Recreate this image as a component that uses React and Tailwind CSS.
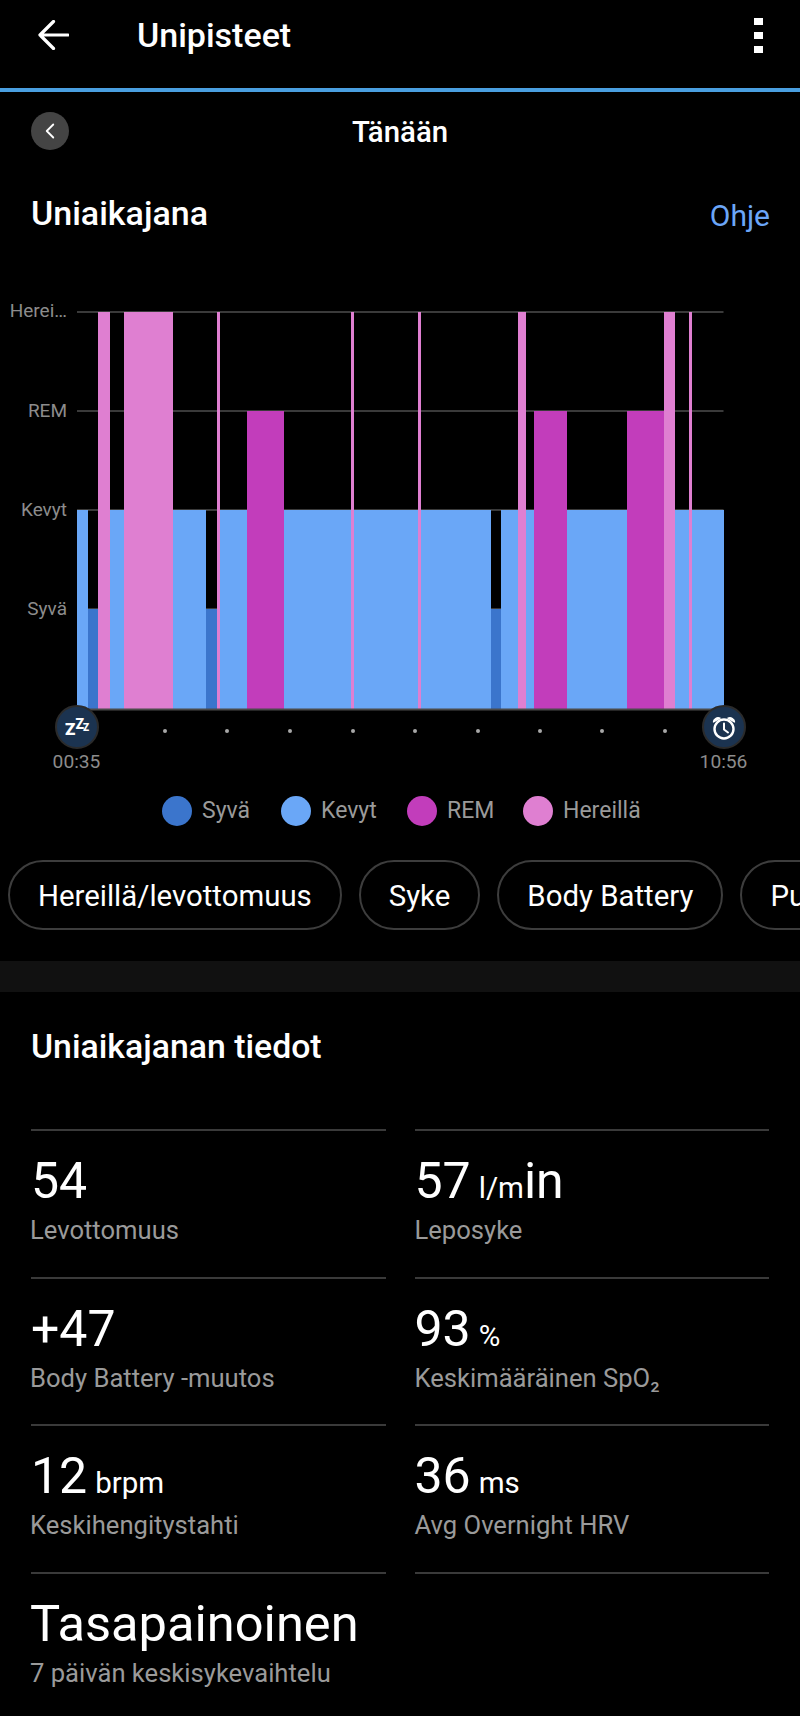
import React from 'react';
import { ChevronLeft } from 'lucide-react';

const LIGHT = '#6aa7f7';
const DEEP = '#3b75cc';
const REM = '#c23dbb';
const AWAKE = '#df7fd1';

const levels = { awake: 312, rem: 411, light: 510, deep: 609 };
const BASE = 709;

// [from, to, level, colour]
const bars = [
  [77, 88, 'light', LIGHT],
  [88, 98, 'deep', DEEP],
  [98, 110, 'awake', AWAKE],
  [110, 124, 'light', LIGHT],
  [124, 173, 'awake', AWAKE],
  [173, 206, 'light', LIGHT],
  [206, 217, 'deep', DEEP],
  [217, 220, 'awake', AWAKE],
  [220, 247, 'light', LIGHT],
  [247, 284, 'rem', REM],
  [284, 351, 'light', LIGHT],
  [351, 354, 'awake', AWAKE],
  [354, 418, 'light', LIGHT],
  [418, 421, 'awake', AWAKE],
  [421, 491, 'light', LIGHT],
  [491, 501, 'deep', DEEP],
  [501, 518, 'light', LIGHT],
  [518, 526, 'awake', AWAKE],
  [526, 534, 'light', LIGHT],
  [534, 567, 'rem', REM],
  [567, 627, 'light', LIGHT],
  [627, 664, 'rem', REM],
  [664, 675, 'awake', AWAKE],
  [675, 689, 'light', LIGHT],
  [689, 692, 'awake', AWAKE],
  [692, 723.5, 'light', LIGHT],
];

const ticks = [165, 227, 290, 353, 415, 478, 540, 602, 665];

const SleepChart = () => (
  <svg viewBox="0 300 800 490" className="block w-full h-[490px]">
    {Object.values(levels).map((y) => (
      <rect key={y} x="77" y={y - 1} width="646.5" height="2" fill="#3a3a3a" />
    ))}
    <g shapeRendering="crispEdges">
      {bars.map(([a, b, level, color]) => (
        <rect key={a} x={a} y={levels[level]} width={b - a} height={BASE - levels[level]} fill={color} />
      ))}
    </g>
    <rect x="77" y={BASE - 0.5} width="646.5" height="2" fill="#4a4a4a" />
    <g fill="#8c8c8c" fontSize="19" textAnchor="end">
      <text x="67" y="317">Herei…</text>
      <text x="67" y="417">REM</text>
      <text x="67" y="516">Kevyt</text>
      <text x="67" y="615">Syvä</text>
    </g>
    {ticks.map((x) => (
      <circle key={x} cx={x} cy="731" r="2" fill="#a8a8a8" />
    ))}
    <circle cx="77" cy="727" r="21" fill="#1b3350" stroke="#2b2b2b" strokeWidth="2" />
    <g fill="#fff" fontWeight="900">
      <text x="65" y="735" fontSize="17">Z</text>
      <text x="75.5" y="729" fontSize="14">Z</text>
      <text x="83" y="731" fontSize="10">Z</text>
    </g>
    <circle cx="724" cy="727" r="21" fill="#1b3350" stroke="#2b2b2b" strokeWidth="2" />
    <g fill="none" stroke="#fff" strokeWidth="2.4" strokeLinecap="round" strokeLinejoin="round">
      <circle cx="724" cy="729" r="9.5" />
      <path d="M724 723.5V729.5L728 732.5" strokeWidth="2" />
      <path d="M713.5 722C713.5 719 717 717 720 718.2Z" fill="#fff" strokeWidth="1.4" />
      <path d="M734.5 722C734.5 719 731 717 728 718.2Z" fill="#fff" strokeWidth="1.4" />
    </g>
    <g fill="#8c8c8c" fontSize="19.2" textAnchor="middle">
      <text x="76.5" y="768">00:35</text>
      <text x="723.5" y="768">10:56</text>
    </g>
  </svg>
);

const LegendItem = ({ color, label, className }) => (
  <div className={`flex items-center ${className}`}>
    <span className="w-[30px] h-[30px] rounded-full mr-[10px]" style={{ backgroundColor: color }} />
    <span className="text-[23px] leading-[30px] text-[#9a9a9a]">{label}</span>
  </div>
);

const Pill = ({ children }) => (
  <div className="shrink-0 h-[70px] px-[28px] pt-[3px] flex items-center rounded-full border-2 border-[#3d3d3d] text-[29.4px] text-white whitespace-nowrap">
    {children}
  </div>
);

const Stat = ({ value, unit, tail, label, big, left }) => (
  <div className="h-[147.7px] border-t-2 border-[#3a3a3a] pt-[21px]">
    <div className={`h-[58px] leading-[58px] text-white whitespace-nowrap ${big ? 'text-[50.6px] -ml-px' : 'text-[50px]'}`}>
      {value}
      {unit && <span className="text-[29.5px] ml-[8px]">{unit}</span>}
      {tail}
    </div>
    <div className={`mt-[5px] text-[25.6px] leading-[30px] text-[#9a9a9a] whitespace-nowrap ${left ? '-ml-px' : ''}`}>{label}</div>
  </div>
);

export default function App() {
  return (
    <div className="w-[800px] h-[1716px] overflow-hidden bg-black text-white font-['Roboto',sans-serif]">
      <header className="h-[92px] border-b-4 border-[#4a9fe0] flex items-center pl-[38px] pr-[37px] pb-[18px]">
        <svg width="31" height="30" viewBox="0 0 31 30" fill="none" stroke="#fff" strokeWidth="3.2" strokeLinecap="round" strokeLinejoin="round">
          <path d="M30 15H2M15.5 1.5L2 15L15.5 28.5" />
        </svg>
        <h1 className="ml-[68px] text-[34px] font-medium flex-1">Unipisteet</h1>
        <div className="flex flex-col gap-[7px]">
          <span className="w-[9px] h-[7px] bg-white" />
          <span className="w-[9px] h-[7px] bg-white" />
          <span className="w-[9px] h-[7px] bg-white" />
        </div>
      </header>

      <div className="relative h-[78px] flex items-center justify-center">
        <button className="absolute left-[31px] w-[38px] h-[38px] rounded-full bg-[#444] flex items-center justify-center">
          <ChevronLeft size={26} strokeWidth={1.7} />
        </button>
        <span className="text-[29.4px] leading-[36px] mt-[1px] font-medium">Tänään</span>
      </div>

      <div className="h-[86px] px-[31px] flex items-center justify-between">
        <h2 className="text-[34px] font-medium">Uniaikajana</h2>
        <span className="text-[30px] mt-[4px] mr-[-1px] text-[#6ba6f8]">Ohje</span>
      </div>

      <div className="h-[44px]" />
      <SleepChart />

      <div className="h-[30px] mt-[6px] flex">
        <LegendItem color={DEEP} label="Syvä" className="ml-[162px] w-[119px]" />
        <LegendItem color={LIGHT} label="Kevyt" className="w-[126px]" />
        <LegendItem color={REM} label="REM" className="w-[116px]" />
        <LegendItem color={AWAKE} label="Hereillä" />
      </div>

      <div className="mt-[34px] pl-[8px] flex gap-[17px] overflow-hidden">
        <Pill>Hereillä/levottomuus</Pill>
        <Pill>Syke</Pill>
        <Pill>Body Battery</Pill>
        <Pill>Pulssioksimetri</Pill>
      </div>

      <div className="mt-[31px] h-[31px] bg-[#111]" />

      <section className="px-[31px]">
        <h2 className="mt-[34px] h-[42px] leading-[42px] text-[33.8px] font-medium">Uniaikajanan tiedot</h2>
        <div className="mt-[61px] grid grid-cols-2 gap-x-[29px]">
          <Stat value="54" left label="Levottomuus" />
          <Stat value="57" unit="l/m" tail="in" label="Leposyke" />
          <Stat value="+47" left label="Body Battery -muutos" />
          <Stat value="93" unit="%" label="Keskimääräinen SpO₂" />
          <Stat value="12" left unit="brpm" label="Keskihengitystahti" />
          <Stat value="36" unit="ms" label="Avg Overnight HRV" />
          <Stat value="Tasapainoinen" big left label="7 päivän keskisykevaihtelu" />
          <div className="border-t-2 border-[#3a3a3a]" />
        </div>
      </section>
    </div>
  );
}
